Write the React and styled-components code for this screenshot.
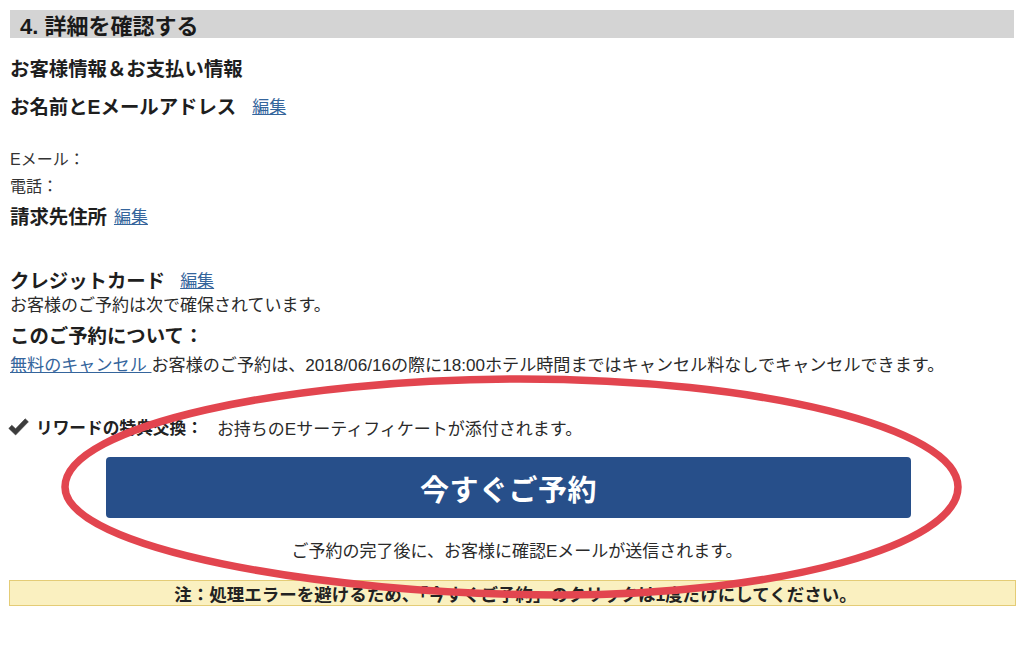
import React from "react";
import styled, { createGlobalStyle } from "styled-components";

const Global = createGlobalStyle`
  html, body { margin: 0; padding: 0; background: #fff; }
  body {
    font-family: "Liberation Sans", "Noto Sans CJK JP", sans-serif;
    color: #222;
  }
`;

const Page = styled.div`
  position: relative;
  width: 1024px;
  height: 654px;
  overflow: hidden;
  padding: 10px 10px 0 10px;
  box-sizing: border-box;
`;

const SectionBar = styled.div`
  height: 28px;
  background: #d4d4d4;
  display: flex;
  align-items: center;
  padding-left: 10px;
  font-size: 22px;
  font-weight: 700;
  color: #1a1a1a;
`;

const Heading = styled.div`
  display: flex;
  align-items: center;
  font-size: 19.4px;
  font-weight: 700;
  color: #1e1e1e;
  height: ${(p) => p.$lh || 28}px;
  margin-top: ${(p) => p.$mt || 0}px;
  white-space: pre;
`;

const EditLink = styled.a`
  font-size: 17px;
  font-weight: 400;
  color: #35659c;
  text-decoration: underline;
  margin-left: ${(p) => p.$ml || 0}px;
  cursor: pointer;
`;

const Label = styled.div`
  display: flex;
  align-items: center;
  font-size: 16px;
  height: 27px;
  color: #333;
  margin-top: ${(p) => p.$mt || 0}px;
`;

const Text = styled.div`
  display: flex;
  align-items: center;
  font-size: ${(p) => p.$fs || 17}px;
  height: ${(p) => p.$lh || 24}px;
  color: #2a2a2a;
  margin-top: ${(p) => p.$mt || 0}px;
  white-space: pre;
`;

const InlineLink = styled.a`
  color: #35659c;
  text-decoration: underline;
`;

const RewardRow = styled.div`
  display: flex;
  align-items: center;
  height: 26px;
  margin-top: 38px;
  font-size: 17px;
  color: #2a2a2a;
  white-space: nowrap;
`;

const CheckIcon = styled.svg`
  width: 21px;
  height: 18px;
  margin-left: -2px;
  margin-right: 7px;
  flex: none;
`;

const RewardLabel = styled.span`
  font-weight: 700;
  font-size: 16.7px;
  color: #222;
  margin-right: 14px;
`;

const ReserveButton = styled.button`
  display: flex;
  align-items: center;
  justify-content: center;
  width: 805px;
  height: 61px;
  margin: 17px 0 0 96px;
  border: none;
  border-radius: 4px;
  background: #274f8a;
  color: #fff;
  font-family: "Liberation Sans", "Noto Sans CJK JP", sans-serif;
  font-size: 29px;
  font-weight: 700;
  letter-spacing: 0.5px;
  cursor: pointer;
`;

const Caption = styled.div`
  display: flex;
  align-items: center;
  justify-content: center;
  font-size: 17px;
  height: 24px;
  color: #2a2a2a;
  margin-top: 19px;
  padding-left: 10px;
`;

const NoteBox = styled.div`
  margin: 19px -2px 0 -1px;
  height: 26px;
  box-sizing: border-box;
  background: #faf0c0;
  border: 1.5px solid #e4cc76;
  display: flex;
  align-items: center;
  justify-content: center;
  font-size: 17.5px;
  font-weight: 700;
  color: #222;
  padding-left: 6px;
  white-space: nowrap;
`;

const Annotation = styled.svg`
  position: absolute;
  left: 0;
  top: 0;
  width: 1024px;
  height: 654px;
  pointer-events: none;
`;

export default function App() {
  return (
    <>
      <Global />
      <Page>
        <SectionBar>4. 詳細を確認する</SectionBar>
        <Heading $mt={15}>お客様情報＆お支払い情報</Heading>
        <Heading $mt={10}>
          お名前とEメールアドレス<EditLink $ml={16}>編集</EditLink>
        </Heading>
        <Label $mt={25}>Eメール：</Label>
        <Label>電話：</Label>
        <Heading $mt={3}>
          請求先住所<EditLink $ml={7}>編集</EditLink>
        </Heading>
        <Heading $mt={38} $lh={24}>
          クレジットカード<EditLink $ml={15}>編集</EditLink>
        </Heading>
        <Text>お客様のご予約は次で確保されています。</Text>
        <Heading $mt={5}>このご予約について：</Heading>
        <Text $fs={17.1} $lh={26} $mt={2}>
          <InlineLink>無料のキャンセル </InlineLink>
          お客様のご予約は、2018/06/16の際に18:00ホテル時間まではキャンセル料なしでキャンセルできます。
        </Text>
        <RewardRow>
          <CheckIcon viewBox="0 0 21 18">
            <path
              d="M0.8 10.4 L3.8 7.2 L7.6 10.8 L17.2 0.8 L20.4 3.8 L7.6 17 Z"
              fill="#3c3c3c"
              stroke="#3c3c3c"
              strokeWidth="0.6"
              strokeLinejoin="round"
            />
          </CheckIcon>
          <RewardLabel>リワードの特典交換：</RewardLabel>
          お持ちのEサーティフィケートが添付されます。
        </RewardRow>
        <ReserveButton>今すぐご予約</ReserveButton>
        <Caption>ご予約の完了後に、お客様に確認Eメールが送信されます。</Caption>
        <NoteBox>
          注：処理エラーを避けるため、「今すぐご予約」のクリックは1度だけにしてください。
        </NoteBox>
        <Annotation viewBox="0 0 1024 654">
          <path
            d="M 65 487 C 65 425, 290 379, 520 379 C 760 379, 958 428, 958 487 C 958 545, 780 595, 560 595 C 320 595, 65 548, 65 487 Z"
            fill="none"
            stroke="#e2454f"
            strokeWidth="7.5"
            strokeLinejoin="round"
          />
        </Annotation>
      </Page>
    </>
  );
}
